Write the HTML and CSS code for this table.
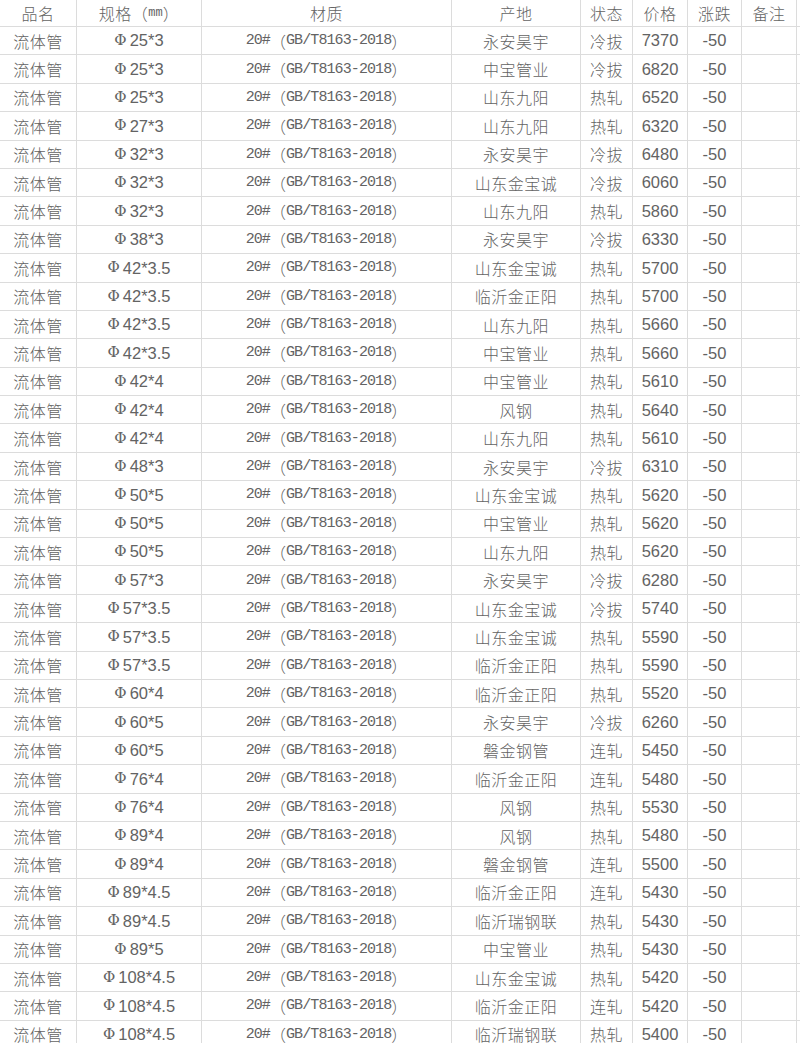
FILE: index.html
```html
<!DOCTYPE html>
<html lang="zh">
<head>
<meta charset="utf-8">
<title>流体管价格表</title>
<link rel="stylesheet" href="styles.css">
</head>
<body>
<div class="sheet">
  <div class="row head"><div class="c">品名</div><div class="c">规格（<span class="mm">mm</span>）</div><div class="c">材质</div><div class="c">产地</div><div class="c">状态</div><div class="c">价格</div><div class="c">涨跌</div><div class="c">备注</div></div>
  <div class="row"><div class="c">流体管</div><div class="c spec"><span class="phi">Φ</span>25*3</div><div class="c mat">20#<span class="br">（</span>GB/T8163-2018<span class="br">）</span></div><div class="c">永安昊宇</div><div class="c">冷拔</div><div class="c num">7370</div><div class="c num">-50</div><div class="c"></div></div>
  <div class="row"><div class="c">流体管</div><div class="c spec"><span class="phi">Φ</span>25*3</div><div class="c mat">20#<span class="br">（</span>GB/T8163-2018<span class="br">）</span></div><div class="c">中宝管业</div><div class="c">冷拔</div><div class="c num">6820</div><div class="c num">-50</div><div class="c"></div></div>
  <div class="row"><div class="c">流体管</div><div class="c spec"><span class="phi">Φ</span>25*3</div><div class="c mat">20#<span class="br">（</span>GB/T8163-2018<span class="br">）</span></div><div class="c">山东九阳</div><div class="c">热轧</div><div class="c num">6520</div><div class="c num">-50</div><div class="c"></div></div>
  <div class="row"><div class="c">流体管</div><div class="c spec"><span class="phi">Φ</span>27*3</div><div class="c mat">20#<span class="br">（</span>GB/T8163-2018<span class="br">）</span></div><div class="c">山东九阳</div><div class="c">热轧</div><div class="c num">6320</div><div class="c num">-50</div><div class="c"></div></div>
  <div class="row"><div class="c">流体管</div><div class="c spec"><span class="phi">Φ</span>32*3</div><div class="c mat">20#<span class="br">（</span>GB/T8163-2018<span class="br">）</span></div><div class="c">永安昊宇</div><div class="c">冷拔</div><div class="c num">6480</div><div class="c num">-50</div><div class="c"></div></div>
  <div class="row"><div class="c">流体管</div><div class="c spec"><span class="phi">Φ</span>32*3</div><div class="c mat">20#<span class="br">（</span>GB/T8163-2018<span class="br">）</span></div><div class="c">山东金宝诚</div><div class="c">冷拔</div><div class="c num">6060</div><div class="c num">-50</div><div class="c"></div></div>
  <div class="row"><div class="c">流体管</div><div class="c spec"><span class="phi">Φ</span>32*3</div><div class="c mat">20#<span class="br">（</span>GB/T8163-2018<span class="br">）</span></div><div class="c">山东九阳</div><div class="c">热轧</div><div class="c num">5860</div><div class="c num">-50</div><div class="c"></div></div>
  <div class="row"><div class="c">流体管</div><div class="c spec"><span class="phi">Φ</span>38*3</div><div class="c mat">20#<span class="br">（</span>GB/T8163-2018<span class="br">）</span></div><div class="c">永安昊宇</div><div class="c">冷拔</div><div class="c num">6330</div><div class="c num">-50</div><div class="c"></div></div>
  <div class="row"><div class="c">流体管</div><div class="c spec"><span class="phi">Φ</span>42*3.5</div><div class="c mat">20#<span class="br">（</span>GB/T8163-2018<span class="br">）</span></div><div class="c">山东金宝诚</div><div class="c">热轧</div><div class="c num">5700</div><div class="c num">-50</div><div class="c"></div></div>
  <div class="row"><div class="c">流体管</div><div class="c spec"><span class="phi">Φ</span>42*3.5</div><div class="c mat">20#<span class="br">（</span>GB/T8163-2018<span class="br">）</span></div><div class="c">临沂金正阳</div><div class="c">热轧</div><div class="c num">5700</div><div class="c num">-50</div><div class="c"></div></div>
  <div class="row"><div class="c">流体管</div><div class="c spec"><span class="phi">Φ</span>42*3.5</div><div class="c mat">20#<span class="br">（</span>GB/T8163-2018<span class="br">）</span></div><div class="c">山东九阳</div><div class="c">热轧</div><div class="c num">5660</div><div class="c num">-50</div><div class="c"></div></div>
  <div class="row"><div class="c">流体管</div><div class="c spec"><span class="phi">Φ</span>42*3.5</div><div class="c mat">20#<span class="br">（</span>GB/T8163-2018<span class="br">）</span></div><div class="c">中宝管业</div><div class="c">热轧</div><div class="c num">5660</div><div class="c num">-50</div><div class="c"></div></div>
  <div class="row"><div class="c">流体管</div><div class="c spec"><span class="phi">Φ</span>42*4</div><div class="c mat">20#<span class="br">（</span>GB/T8163-2018<span class="br">）</span></div><div class="c">中宝管业</div><div class="c">热轧</div><div class="c num">5610</div><div class="c num">-50</div><div class="c"></div></div>
  <div class="row"><div class="c">流体管</div><div class="c spec"><span class="phi">Φ</span>42*4</div><div class="c mat">20#<span class="br">（</span>GB/T8163-2018<span class="br">）</span></div><div class="c">风钢</div><div class="c">热轧</div><div class="c num">5640</div><div class="c num">-50</div><div class="c"></div></div>
  <div class="row"><div class="c">流体管</div><div class="c spec"><span class="phi">Φ</span>42*4</div><div class="c mat">20#<span class="br">（</span>GB/T8163-2018<span class="br">）</span></div><div class="c">山东九阳</div><div class="c">热轧</div><div class="c num">5610</div><div class="c num">-50</div><div class="c"></div></div>
  <div class="row"><div class="c">流体管</div><div class="c spec"><span class="phi">Φ</span>48*3</div><div class="c mat">20#<span class="br">（</span>GB/T8163-2018<span class="br">）</span></div><div class="c">永安昊宇</div><div class="c">冷拔</div><div class="c num">6310</div><div class="c num">-50</div><div class="c"></div></div>
  <div class="row"><div class="c">流体管</div><div class="c spec"><span class="phi">Φ</span>50*5</div><div class="c mat">20#<span class="br">（</span>GB/T8163-2018<span class="br">）</span></div><div class="c">山东金宝诚</div><div class="c">热轧</div><div class="c num">5620</div><div class="c num">-50</div><div class="c"></div></div>
  <div class="row"><div class="c">流体管</div><div class="c spec"><span class="phi">Φ</span>50*5</div><div class="c mat">20#<span class="br">（</span>GB/T8163-2018<span class="br">）</span></div><div class="c">中宝管业</div><div class="c">热轧</div><div class="c num">5620</div><div class="c num">-50</div><div class="c"></div></div>
  <div class="row"><div class="c">流体管</div><div class="c spec"><span class="phi">Φ</span>50*5</div><div class="c mat">20#<span class="br">（</span>GB/T8163-2018<span class="br">）</span></div><div class="c">山东九阳</div><div class="c">热轧</div><div class="c num">5620</div><div class="c num">-50</div><div class="c"></div></div>
  <div class="row"><div class="c">流体管</div><div class="c spec"><span class="phi">Φ</span>57*3</div><div class="c mat">20#<span class="br">（</span>GB/T8163-2018<span class="br">）</span></div><div class="c">永安昊宇</div><div class="c">冷拔</div><div class="c num">6280</div><div class="c num">-50</div><div class="c"></div></div>
  <div class="row"><div class="c">流体管</div><div class="c spec"><span class="phi">Φ</span>57*3.5</div><div class="c mat">20#<span class="br">（</span>GB/T8163-2018<span class="br">）</span></div><div class="c">山东金宝诚</div><div class="c">冷拔</div><div class="c num">5740</div><div class="c num">-50</div><div class="c"></div></div>
  <div class="row"><div class="c">流体管</div><div class="c spec"><span class="phi">Φ</span>57*3.5</div><div class="c mat">20#<span class="br">（</span>GB/T8163-2018<span class="br">）</span></div><div class="c">山东金宝诚</div><div class="c">热轧</div><div class="c num">5590</div><div class="c num">-50</div><div class="c"></div></div>
  <div class="row"><div class="c">流体管</div><div class="c spec"><span class="phi">Φ</span>57*3.5</div><div class="c mat">20#<span class="br">（</span>GB/T8163-2018<span class="br">）</span></div><div class="c">临沂金正阳</div><div class="c">热轧</div><div class="c num">5590</div><div class="c num">-50</div><div class="c"></div></div>
  <div class="row"><div class="c">流体管</div><div class="c spec"><span class="phi">Φ</span>60*4</div><div class="c mat">20#<span class="br">（</span>GB/T8163-2018<span class="br">）</span></div><div class="c">临沂金正阳</div><div class="c">热轧</div><div class="c num">5520</div><div class="c num">-50</div><div class="c"></div></div>
  <div class="row"><div class="c">流体管</div><div class="c spec"><span class="phi">Φ</span>60*5</div><div class="c mat">20#<span class="br">（</span>GB/T8163-2018<span class="br">）</span></div><div class="c">永安昊宇</div><div class="c">冷拔</div><div class="c num">6260</div><div class="c num">-50</div><div class="c"></div></div>
  <div class="row"><div class="c">流体管</div><div class="c spec"><span class="phi">Φ</span>60*5</div><div class="c mat">20#<span class="br">（</span>GB/T8163-2018<span class="br">）</span></div><div class="c">磐金钢管</div><div class="c">连轧</div><div class="c num">5450</div><div class="c num">-50</div><div class="c"></div></div>
  <div class="row"><div class="c">流体管</div><div class="c spec"><span class="phi">Φ</span>76*4</div><div class="c mat">20#<span class="br">（</span>GB/T8163-2018<span class="br">）</span></div><div class="c">临沂金正阳</div><div class="c">连轧</div><div class="c num">5480</div><div class="c num">-50</div><div class="c"></div></div>
  <div class="row"><div class="c">流体管</div><div class="c spec"><span class="phi">Φ</span>76*4</div><div class="c mat">20#<span class="br">（</span>GB/T8163-2018<span class="br">）</span></div><div class="c">风钢</div><div class="c">热轧</div><div class="c num">5530</div><div class="c num">-50</div><div class="c"></div></div>
  <div class="row"><div class="c">流体管</div><div class="c spec"><span class="phi">Φ</span>89*4</div><div class="c mat">20#<span class="br">（</span>GB/T8163-2018<span class="br">）</span></div><div class="c">风钢</div><div class="c">热轧</div><div class="c num">5480</div><div class="c num">-50</div><div class="c"></div></div>
  <div class="row"><div class="c">流体管</div><div class="c spec"><span class="phi">Φ</span>89*4</div><div class="c mat">20#<span class="br">（</span>GB/T8163-2018<span class="br">）</span></div><div class="c">磐金钢管</div><div class="c">连轧</div><div class="c num">5500</div><div class="c num">-50</div><div class="c"></div></div>
  <div class="row"><div class="c">流体管</div><div class="c spec"><span class="phi">Φ</span>89*4.5</div><div class="c mat">20#<span class="br">（</span>GB/T8163-2018<span class="br">）</span></div><div class="c">临沂金正阳</div><div class="c">连轧</div><div class="c num">5430</div><div class="c num">-50</div><div class="c"></div></div>
  <div class="row"><div class="c">流体管</div><div class="c spec"><span class="phi">Φ</span>89*4.5</div><div class="c mat">20#<span class="br">（</span>GB/T8163-2018<span class="br">）</span></div><div class="c">临沂瑞钢联</div><div class="c">热轧</div><div class="c num">5430</div><div class="c num">-50</div><div class="c"></div></div>
  <div class="row"><div class="c">流体管</div><div class="c spec"><span class="phi">Φ</span>89*5</div><div class="c mat">20#<span class="br">（</span>GB/T8163-2018<span class="br">）</span></div><div class="c">中宝管业</div><div class="c">热轧</div><div class="c num">5430</div><div class="c num">-50</div><div class="c"></div></div>
  <div class="row"><div class="c">流体管</div><div class="c spec"><span class="phi">Φ</span>108*4.5</div><div class="c mat">20#<span class="br">（</span>GB/T8163-2018<span class="br">）</span></div><div class="c">山东金宝诚</div><div class="c">热轧</div><div class="c num">5420</div><div class="c num">-50</div><div class="c"></div></div>
  <div class="row"><div class="c">流体管</div><div class="c spec"><span class="phi">Φ</span>108*4.5</div><div class="c mat">20#<span class="br">（</span>GB/T8163-2018<span class="br">）</span></div><div class="c">临沂金正阳</div><div class="c">连轧</div><div class="c num">5420</div><div class="c num">-50</div><div class="c"></div></div>
  <div class="row"><div class="c">流体管</div><div class="c spec"><span class="phi">Φ</span>108*4.5</div><div class="c mat">20#<span class="br">（</span>GB/T8163-2018<span class="br">）</span></div><div class="c">临沂瑞钢联</div><div class="c">热轧</div><div class="c num">5400</div><div class="c num">-50</div><div class="c"></div></div>
</div>
</body>
</html>
```

FILE: styles.css
```css
html, body {
  margin: 0;
  padding: 0;
  background: #ffffff;
}

.sheet {
  width: 800px;
  color: #636363;
  font-family: "Noto Sans CJK SC", "Noto Sans CJK JP", sans-serif;
  font-size: 16px;
}

.row {
  display: grid;
  grid-template-columns: 77px 125px 250px 129px 52px 55px 54px 55px;
  height: 28.4px;
  box-sizing: border-box;
  border-bottom: 1px solid #dcdcdc;
}

.row.head {
  height: 27px;
}

.c {
  display: flex;
  align-items: center;
  justify-content: center;
  white-space: nowrap;
  border-right: 1px solid #dcdcdc;
  box-sizing: border-box;
  line-height: 1;
  font-weight: 300;
  letter-spacing: 0.5px;
}

.mm {
  font-family: "Liberation Mono", monospace;
  font-size: 12px;
  letter-spacing: 0;
}

.spec {
  font-family: "Liberation Sans", "Noto Sans CJK SC", sans-serif;
  font-size: 16.5px;
  font-weight: 400;
  letter-spacing: 0;
}

.phi {
  font-family: "DejaVu Serif", serif;
  font-size: 15px;
  margin-right: 3px;
}

.mat {
  font-family: "Liberation Mono", monospace;
  font-size: 15px;
  font-weight: 400;
  letter-spacing: -0.9px;
}

.br {
  font-family: "Noto Sans CJK SC", sans-serif;
  font-size: 16px;
  font-weight: 300;
  letter-spacing: 0;
}

.num {
  font-family: "Liberation Sans", sans-serif;
  font-size: 16.5px;
  font-weight: 400;
  letter-spacing: 0;
}
```
